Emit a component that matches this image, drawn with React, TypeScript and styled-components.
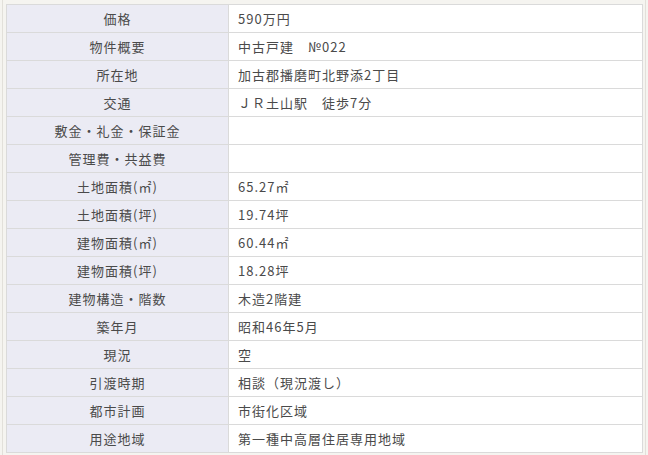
import styled, { createGlobalStyle } from "styled-components";

const GlobalStyle = createGlobalStyle`
  html, body {
    margin: 0;
    padding: 0;
    background: #f5f4f0;
  }
`;

/* --- styled components --- */

const Wrapper = styled.div`
  margin: 0 2px;
  padding: 4px 2px 3px 3px;
  border-left: 1px solid #e2e0da;
  border-right: 1px solid #e2e0da;
  font-family: "Noto Sans CJK JP", "Noto Sans", sans-serif;
`;

const Table = styled.table`
  width: 100%;
  border-collapse: collapse;
  table-layout: fixed;
  font-size: 13px;
  color: #4a4a4a;
  letter-spacing: 1px;
`;

const Head = styled.th`
  width: 221px;
  height: 27px;
  padding: 0;
  background: #ebebf4;
  border: 1px solid #dadada;
  font-weight: normal;
  text-align: center;
`;

const Cell = styled.td`
  height: 27px;
  padding: 0 9px;
  background: #fff;
  border: 1px solid #dadada;
  text-align: left;
  white-space: nowrap;
`;

/* --- data --- */

const rows: [string, string][] = [
  ["価格", "590万円"],
  ["物件概要", "中古戸建　№022"],
  ["所在地", "加古郡播磨町北野添2丁目"],
  ["交通", "ＪＲ土山駅　徒歩7分"],
  ["敷金・礼金・保証金", ""],
  ["管理費・共益費", ""],
  ["土地面積(㎡)", "65.27㎡"],
  ["土地面積(坪)", "19.74坪"],
  ["建物面積(㎡)", "60.44㎡"],
  ["建物面積(坪)", "18.28坪"],
  ["建物構造・階数", "木造2階建"],
  ["築年月", "昭和46年5月"],
  ["現況", "空"],
  ["引渡時期", "相談（現況渡し）"],
  ["都市計画", "市街化区域"],
  ["用途地域", "第一種中高層住居専用地域"],
];

/* --- component --- */

export default function App() {
  return (
    <>
      <GlobalStyle />
      <Wrapper>
        <Table>
          <tbody>
            {rows.map(([label, value]) => (
              <tr key={label}>
                <Head>{label}</Head>
                <Cell>{value}</Cell>
              </tr>
            ))}
          </tbody>
        </Table>
      </Wrapper>
    </>
  );
}
